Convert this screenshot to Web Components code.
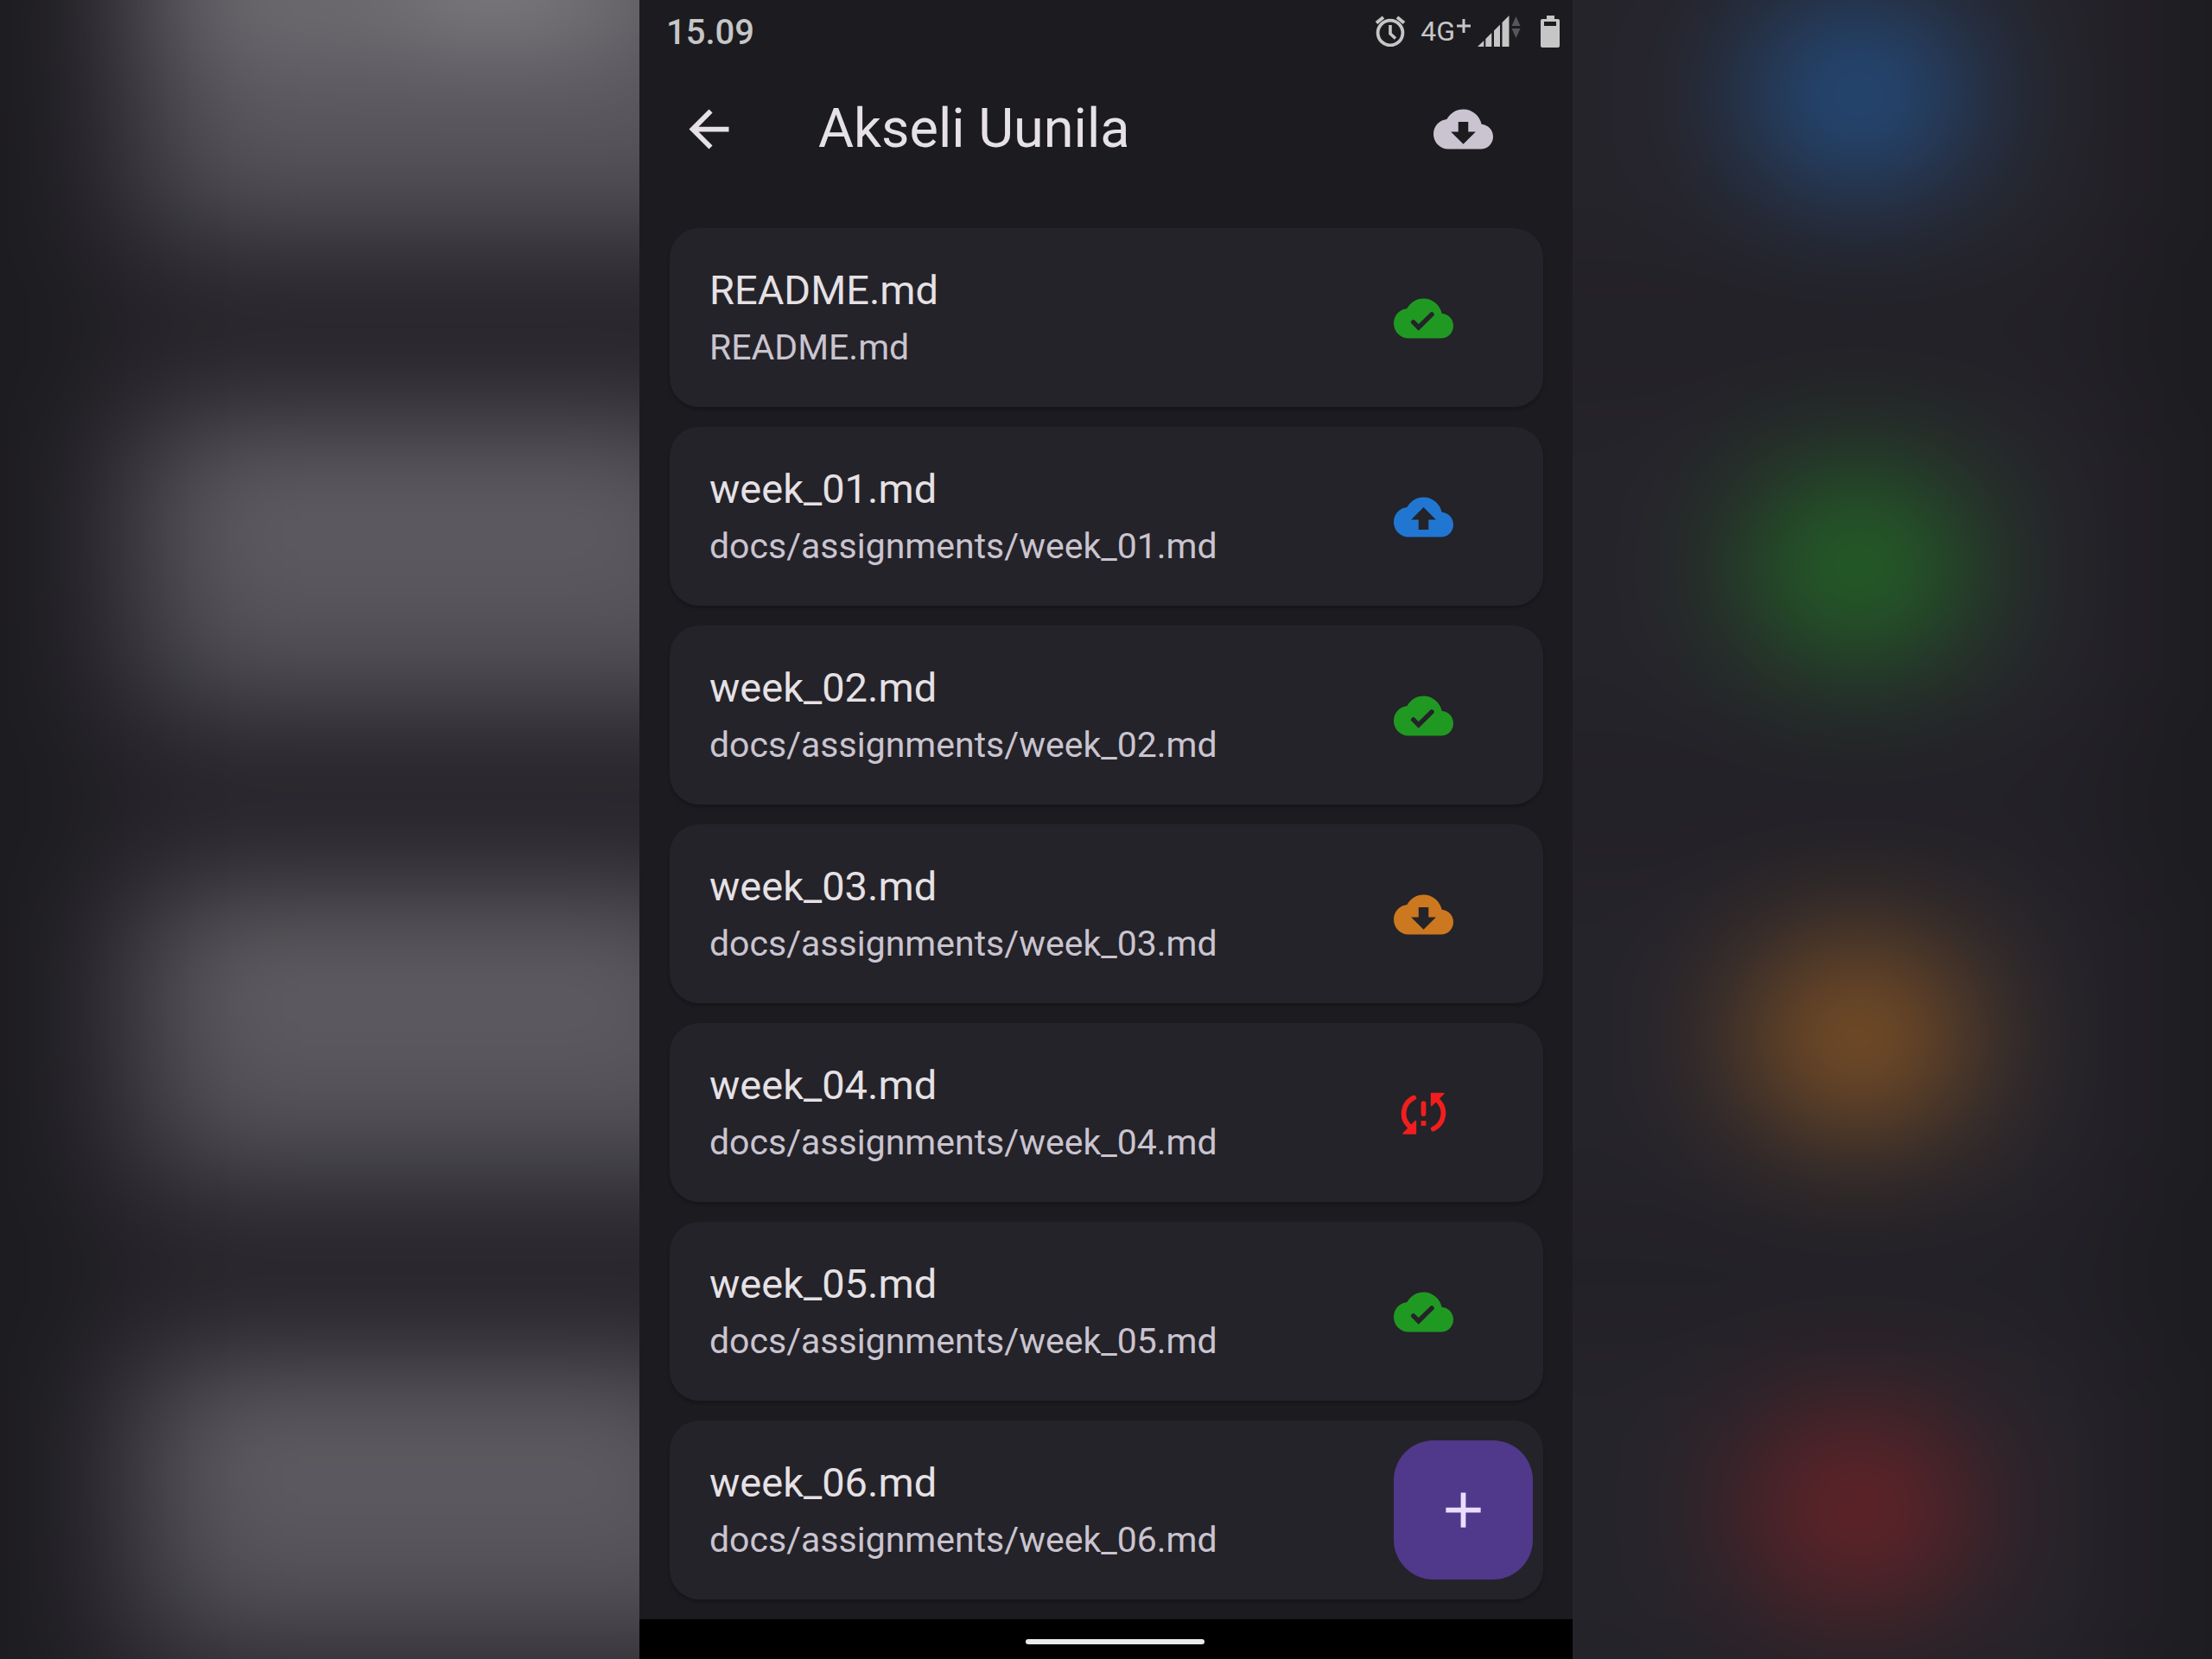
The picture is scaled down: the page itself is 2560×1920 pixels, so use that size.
<!DOCTYPE html>
<html lang="en">
<head>
<meta charset="utf-8">
<title>Akseli Uunila</title>
<style>
  html, body { margin: 0; height: 100%; background: #1c1b1f; }
  body { font-family: Roboto, "Noto Sans", sans-serif; }
</style>
</head>
<body>
<app-stage>
  <blur-backdrop slot="backdrop"></blur-backdrop>
  <phone-screen>
    <status-bar slot="status" time="15.09"></status-bar>
    <app-bar slot="bar">Akseli Uunila</app-bar>
    <file-card status="done"><span slot="name">README.md</span><span slot="path">README.md</span></file-card>
    <file-card status="upload"><span slot="name">week_01.md</span><span slot="path">docs/assignments/week_01.md</span></file-card>
    <file-card status="done"><span slot="name">week_02.md</span><span slot="path">docs/assignments/week_02.md</span></file-card>
    <file-card status="download"><span slot="name">week_03.md</span><span slot="path">docs/assignments/week_03.md</span></file-card>
    <file-card status="problem"><span slot="name">week_04.md</span><span slot="path">docs/assignments/week_04.md</span></file-card>
    <file-card status="done"><span slot="name">week_05.md</span><span slot="path">docs/assignments/week_05.md</span></file-card>
    <file-card><span slot="name">week_06.md</span><span slot="path">docs/assignments/week_06.md</span></file-card>
    <add-button slot="fab"></add-button>
    <gesture-bar slot="nav"></gesture-bar>
  </phone-screen>
</app-stage>

<script>
const CLOUD = 'M19.35 10.04C18.67 6.59 15.64 4 12 4 9.11 4 6.6 5.64 5.35 8.04 2.34 8.36 0 10.91 0 14c0 3.31 2.69 6 6 6h13c2.76 0 5-2.24 5-5 0-2.64-2.05-4.78-4.65-4.96z';
const ICONS = {
  back: '<path d="M20 11H7.83l5.59-5.59L12 4l-8 8 8 8 1.41-1.41L7.83 13H20v-2z"/>',
  add: '<path d="M19 13h-6v6h-2v-6H5v-2h6V5h2v6h6v2z"/>',
  download: `<path fill-rule="evenodd" d="${CLOUD}M17 13l-5 5-5-5h3V9h4v4h3z"/>`,
  upload: `<path fill-rule="evenodd" d="${CLOUD}M14 13v4h-4v-4H7l5-5 5 5h-3z"/>`,
  done: `<path d="${CLOUD}"/><path d="M7.9 13.5l2.1 2.1 5.3-5.2" fill="none" stroke="#242329" stroke-width="1.9" stroke-linecap="round"/>`,
  problem: '<g fill="none" stroke="currentColor" stroke-width="2" stroke-linecap="round"><path d="M8.1 5.7A7 7 0 0 0 6.1 17M15.9 18.3A7 7 0 0 0 17.9 7M12 8v4.2"/></g><g stroke="currentColor" stroke-width=".6" stroke-linejoin="round"><path d="M8.8 15.2v4.9H3.900zM15.2 8.8V4h4.900z"/></g><path d="M11 15h2v2h-2z"/>'
};

class BaseElement extends HTMLElement {
  constructor() {
    super();
    this.attachShadow({ mode: 'open' });
  }
  connectedCallback() { this.shadowRoot.innerHTML = this.render(); }
}

customElements.define('md-icon', class extends BaseElement {
  render() {
    return `<style>:host{display:block;width:69px;height:69px;flex:none}svg{display:block;width:100%;height:100%}</style>
      <svg viewBox="0 0 24 24" fill="currentColor" aria-hidden="true">${ICONS[this.getAttribute('name')]}</svg>`;
  }
});

customElements.define('app-stage', class extends BaseElement {
  render() {
    return `<style>
      :host{display:grid;grid-template:minmax(0,1fr)/minmax(0,1fr);min-height:100vh;overflow:hidden}
      ::slotted(*){grid-area:1/1}
      </style><slot name="backdrop"></slot><slot></slot>`;
  }
});

/* Enlarged, heavily blurred echo of the file list behind the phone. */
customElements.define('blur-backdrop', class extends BaseElement {
  render() {
    const rows = [[110, '#2176d2', .56], [655, '#209922', .62], [1200, '#cc7820', .6], [1746, '#f21e1e', .36], [2291, '#209922', 0]];
    const shapes = rows.map(([y, c, o]) => `
      <rect x="83" y="${y - 245}" width="2397" height="490" rx="80" fill="#26242b"/>
      <rect x="172" y="${y - 122}" width="662" height="78" fill="#e6e1e5" opacity=".58"/>
      <rect x="172" y="${y + 38}" width="1426" height="76" fill="#cac4d0" opacity=".58"/>
      <ellipse cx="2151" cy="${y}" rx="130" ry="105" fill="${c}" opacity="${o}"/>`).join('');
    return `<style>:host{display:block;overflow:hidden}svg{display:block;width:100%;height:100%}</style>
      <svg viewBox="0 0 2560 1920" preserveAspectRatio="xMidYMid slice" aria-hidden="true">
        <filter id="b" filterUnits="userSpaceOnUse" x="-300" y="-300" width="3160" height="2520" color-interpolation-filters="sRGB"><feGaussianBlur stdDeviation="78"/></filter>
        <g filter="url(#b)">
          <rect x="-300" y="-300" width="3160" height="2520" fill="#1c1b1f"/>
          ${shapes}
          <rect x="172" y="-300" width="1426" height="2520" fill="#e6e1e5" opacity=".025"/>
          <rect x="172" y="-160" width="662" height="148" fill="#e6e1e5" opacity=".28"/>
          <ellipse cx="571" cy="-60" rx="30" ry="60" fill="#fff" opacity=".7"/>
        </g>
      </svg>`;
  }
});

customElements.define('phone-screen', class extends BaseElement {
  render() {
    return `<style>
      :host{display:flex;flex-direction:column;justify-self:center;position:relative;width:56.25vh;max-width:100%;min-height:100vh;box-sizing:border-box;background:#1c1b1f;color:#e6e1e5}
      main{flex:1;display:flex;flex-direction:column;gap:23px;padding:40px 34px 23px 35px}
      .fab{position:absolute;right:46px;bottom:92px}
      </style>
      <slot name="status"></slot><slot name="bar"></slot>
      <main><slot></slot></main>
      <div class="fab"><slot name="fab"></slot></div>
      <slot name="nav"></slot>`;
  }
});

customElements.define('status-bar', class extends BaseElement {
  render() {
    return `<style>
      :host{display:flex;align-items:center;height:74px;padding:0 15px 2px 31px;color:#c6c6c6;box-sizing:border-box}
      time{font-size:40px;font-weight:500;line-height:48px;flex:1;padding-top:4px}
      .net{font-size:32px;line-height:40px;margin-left:17px}
      svg{display:block;flex:none}
      .plus{margin:0 8px 12px 2px}
      .bat{margin-left:23px}
      </style>
      <time>${this.getAttribute('time')}</time>
      <svg width="36" height="36" viewBox="0 0 36 36" fill="none" stroke="currentColor" aria-hidden="true"><circle cx="18" cy="20" r="14.4" stroke-width="3.8"/><path d="M2 8.500l8-6.500M34 8.500l-8-6.500" stroke-width="4"/><path d="M18 11v10l6 5.500" stroke-width="3.600"/></svg>
      <span class="net">4G</span>
      <svg class="plus" width="16" height="16" viewBox="0 0 16 16" fill="currentColor" aria-hidden="true"><path d="M6.500 0h3v6.500H16v3H9.500V16h-3V9.500H0v-3h6.500z"/></svg>
      <svg width="50" height="36" viewBox="0 0 50 36" fill="currentColor" aria-hidden="true"><path d="M0 36l7.300-7v7zM9.300 27l7-7v16h-7zM19 17.500l7-7V36h-7zM28.500 8L36.500 0v36h-8z"/><path fill="#57565a" d="M39.500 12l5-11 5 11zM39.500 15h10l-5 11z"/></svg>
      <svg class="bat" width="22" height="37" viewBox="0 0 22 37" aria-hidden="true"><path fill="currentColor" fill-rule="evenodd" d="M7 0h9v4h4a2 2 0 0 1 2 2v29a2 2 0 0 1-2 2H2a2 2 0 0 1-2-2V6a2 2 0 0 1 2-2h5zM4 7v5h14V7z"/></svg>`;
  }
});

customElements.define('app-bar', class extends BaseElement {
  render() {
    return `<style>
      :host{display:flex;align-items:center;height:150px;padding:0 92px 0 46px;box-sizing:border-box}
      button{appearance:none;border:0;padding:0;background:none;color:#e6e1e5;display:block;flex:none}
      .sync{color:#cac4d0}
      h1{flex:1;margin:0 0 0 92px;font-size:63px;line-height:80px;font-weight:400}
      </style>
      <button aria-label="Back"><md-icon name="back"></md-icon></button>
      <h1><slot></slot></h1>
      <button class="sync" aria-label="Download all"><md-icon name="download"></md-icon></button>`;
  }
});

customElements.define('file-card', class extends BaseElement {
  render() {
    const s = this.getAttribute('status');
    return `<style>
      :host{display:flex;align-items:center;padding:42px 104px 41px 46px;border-radius:34px;background:#242329;box-shadow:0 3px 3px #17161a}
      .text{flex:1;display:flex;flex-direction:column;gap:8px;min-width:0}
      .name{font-size:47px;line-height:60px;color:#e6e1e5}
      .path{font-size:41px;line-height:56px;color:#cac4d0}
      .done{color:#209922}.upload{color:#2176d2}.download{color:#cc7820}.problem{color:#f21e1e}
      </style>
      <div class="text"><div class="name"><slot name="name"></slot></div><div class="path"><slot name="path"></slot></div></div>
      ${s ? `<md-icon class="${s}" name="${s}"></md-icon>` : ''}`;
  }
});

customElements.define('add-button', class extends BaseElement {
  render() {
    return `<style>
      :host{display:block}
      button{appearance:none;border:0;padding:46px;border-radius:46px;background:#50388a;color:#eaddff;display:block}
      </style><button aria-label="Add file"><md-icon name="add"></md-icon></button>`;
  }
});

customElements.define('gesture-bar', class extends BaseElement {
  render() {
    return `<style>
      :host{display:flex;align-items:center;justify-content:center;height:46px;padding:6px 0 0 20px;box-sizing:border-box;background:#000}
      i{display:block;width:207px;height:6px;border-radius:3px;background:#eaeaea}
      </style><i></i>`;
  }
});
</script>
</body>
</html>
